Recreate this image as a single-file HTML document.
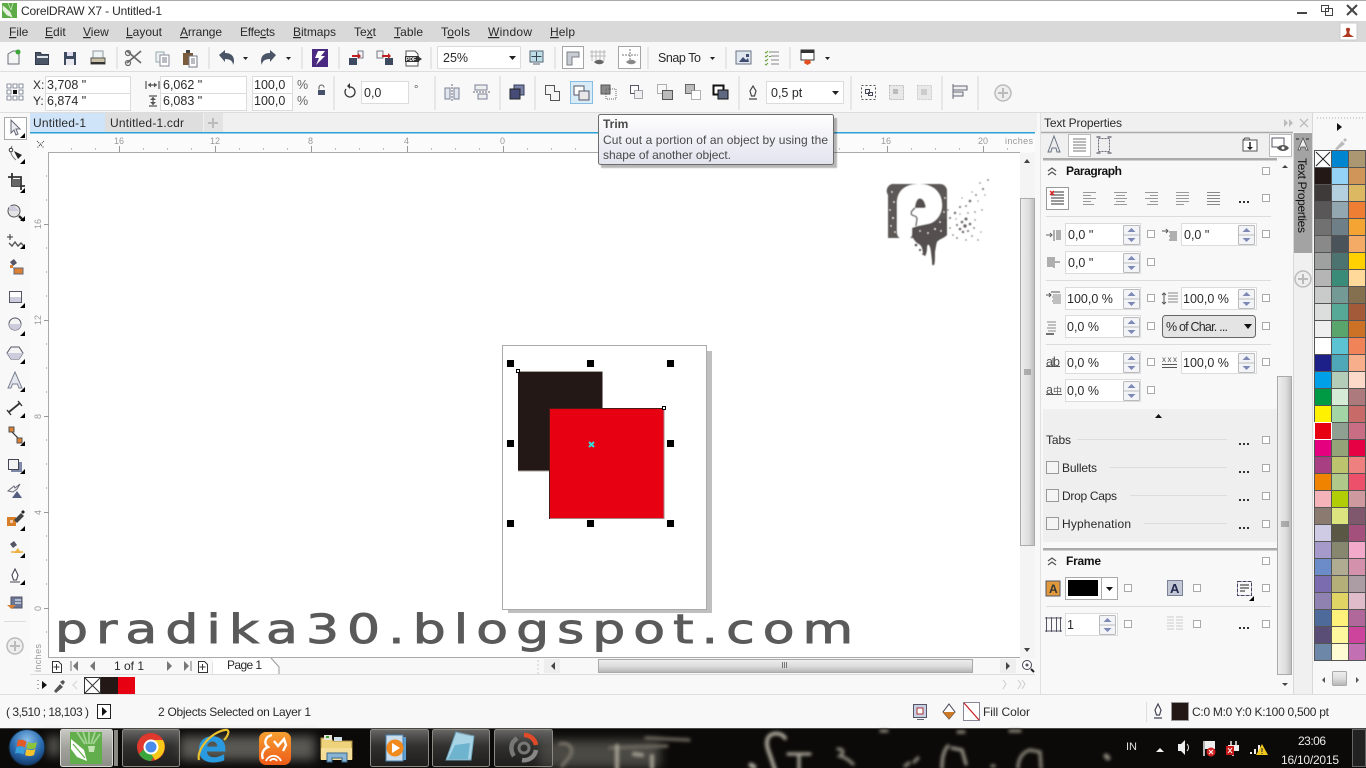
<!DOCTYPE html>
<html><head><meta charset="utf-8"><title>CorelDRAW X7 - Untitled-1</title>
<style>
html,body{margin:0;padding:0;width:1366px;height:768px;overflow:hidden;background:#f8f8f8}
svg{position:absolute;left:0;top:0;display:block}
text{font-family:"Liberation Sans",sans-serif;font-size:12px;fill:#2a2a2a}
.u{text-decoration:underline}
.r{font-size:9px;fill:#999}
.b{font-weight:bold;fill:#111}
.g{fill:none;stroke:#5a6478;stroke-width:1}
.l{stroke:#8a8f98;stroke-width:1;fill:none}
.s{stroke:#d6d6d6;stroke-width:1}
.ip{fill:#fff;stroke:#dcdcdc}
</style></head><body>
<svg width="1366" height="768" viewBox="0 0 1366 768" xmlns="http://www.w3.org/2000/svg">
<defs>
<linearGradient id="tip" x1="0" y1="0" x2="0" y2="1"><stop offset="0" stop-color="#fff"/><stop offset="1" stop-color="#e2e3ee"/></linearGradient>
<linearGradient id="sb" x1="0" y1="0" x2="0" y2="1"><stop offset="0" stop-color="#eee"/><stop offset=".5" stop-color="#ddd"/><stop offset="1" stop-color="#b4b4b4"/></linearGradient>
<linearGradient id="sv" x1="0" y1="0" x2="1" y2="0"><stop offset="0" stop-color="#eee"/><stop offset=".6" stop-color="#ddd"/><stop offset="1" stop-color="#bbb"/></linearGradient>
<linearGradient id="tb" x1="0" y1="0" x2="0" y2="1"><stop offset="0" stop-color="#888" stop-opacity=".75"/><stop offset=".45" stop-color="#4a4a48" stop-opacity=".6"/><stop offset="1" stop-color="#333" stop-opacity=".5"/></linearGradient>
<linearGradient id="ta" x1="0" y1="0" x2="0" y2="1"><stop offset="0" stop-color="#c8c8c4"/><stop offset=".5" stop-color="#a2a29c"/><stop offset="1" stop-color="#8e8e88"/></linearGradient>
<linearGradient id="uc" x1="0" y1="0" x2="0" y2="1"><stop offset="0" stop-color="#f5a030"/><stop offset="1" stop-color="#ee5a18"/></linearGradient>
<radialGradient id="orb" cx=".5" cy=".3" r=".75"><stop offset="0" stop-color="#8cc0ea"/><stop offset=".55" stop-color="#2a6cb0"/><stop offset="1" stop-color="#0e2f5c"/></radialGradient>
<filter id="bl" x="-20%" y="-50%" width="140%" height="200%"><feGaussianBlur stdDeviation="1.700"/></filter>
<filter id="bl3" x="-20%" y="-50%" width="140%" height="200%"><feGaussianBlur stdDeviation="5"/></filter>
<filter id="bl2"><feGaussianBlur stdDeviation="0.5"/></filter>
<g id="cb"><rect x=".5" y=".5" width="7" height="7" fill="#fff" stroke="#aaa"/></g>
<g id="sp"><rect x=".5" y="1.5" width="16" height="19" rx="1" fill="#f2f4f8" stroke="#bbb"/><path d="M.5 11h16" stroke="#bbb"/><path d="M8.500 4l4 4h-8z" fill="#7d88b4"/><path d="M4.500 14h8l-4 4z" fill="#7d88b4"/></g>
<g id="tri"><path d="M0 0h5l-2.500 3z" fill="#222"/></g>
<g id="dots"><path d="M0 0h2v2H0zM4 0h2v2H4zM8 0h2v2H8z" fill="#333"/></g>
<g id="corner"><path d="M5 0v5H0z" fill="#000"/></g>
<g id="plus"><circle cx="0" cy="0" r="8" fill="#eee" stroke="#bbb" stroke-width="1.500"/><path d="M-5 0H5M0-5V5" stroke="#bbb" stroke-width="2"/></g>
</defs>

<!-- chrome backgrounds -->
<rect width="1366" height="768" fill="#f8f8f8"/>
<rect width="1366" height="21" fill="#fff"/>
<rect width="1366" height="1" fill="#aaa"/>
<rect y="21" width="1366" height="21" fill="#d9d9d9"/>
<path d="M0 71.500h1366M0 112.500h1366" stroke="#dedede"/>

<!-- title -->
<rect x="2" y="3" width="15" height="15" fill="#5cab47"/><path d="M3 6l7 6 2 5-5-2-4-5zM8 3l3 7M13 3l-2 7" fill="#e6f2de" stroke="#e6f2de" stroke-width=".6"/>
<text x="21" y="15" textLength="141">CorelDRAW X7 - Untitled-1</text>
<rect x="1297" y="12" width="10" height="2" fill="#444"/>
<path d="M1321.500 5.500h7v6h-7zM1325.500 8.500h7v7h-7z" fill="#fff" stroke="#444"/>
<path d="M1347 5l10 10M1357 5l-10 10" stroke="#444" stroke-width="2"/>
<rect x="1340" y="23" width="17" height="17" fill="#fff" stroke="#ccc"/><path d="M1345 35c2-1 2-3 1-5-1-3 5-3 4 0-1 2-1 4 1 5l3 2h-12z" fill="#b03a20"/>

<!-- menu -->
<text x="9" y="36"><tspan class="u">F</tspan>ile</text>
<text x="45" y="36"><tspan class="u">E</tspan>dit</text>
<text x="83" y="36"><tspan class="u">V</tspan>iew</text>
<text x="126" y="36" textLength="36"><tspan class="u">L</tspan>ayout</text>
<text x="180" y="36" textLength="42"><tspan class="u">A</tspan>rrange</text>
<text x="240" y="36" textLength="35">Effe<tspan class="u">c</tspan>ts</text>
<text x="293" y="36" textLength="43"><tspan class="u">B</tspan>itmaps</text>
<text x="354" y="36" textLength="22">Te<tspan class="u">x</tspan>t</text>
<text x="394" y="36" textLength="29"><tspan class="u">T</tspan>able</text>
<text x="441" y="36" textLength="29">T<tspan class="u">o</tspan>ols</text>
<text x="488" y="36" textLength="44"><tspan class="u">W</tspan>indow</text>
<text x="550" y="36" textLength="25"><tspan class="u">H</tspan>elp</text>

<!-- standard toolbar -->
<g>
<path d="M8 54l5-3h6v13H8z" fill="#f4f4f4" stroke="#6a6f78"/><circle cx="18" cy="52" r="2.500" fill="#3aa535"/>
<path d="M35.500 52.500h5l1 2h7v10h-13z" fill="#4a5568" stroke="#333c4c"/><path d="M37 56h11v2H37z" fill="#dfe3ea"/>
<path d="M64 52h12v13H64z" fill="#3e4a60"/><path d="M67 52h6v4h-6z" fill="#dde"/><path d="M66 59h8v6h-8z" fill="#e8eaf0"/>
<path d="M93 51h10v7H93z" fill="#eef4f4" stroke="#8c98a0"/><path d="M91 58h14v6H91z" fill="#c9c2a8" stroke="#555"/><path d="M91 62h14v2H91z" fill="#333"/>
<path class="s" d="M117 47v22"/>
<path d="M127 51l14 12M141 51l-14 12" stroke="#6c6c6c" stroke-width="1.800"/><circle cx="128" cy="63" r="2.500" fill="none" stroke="#6c6c6c" stroke-width="1.300"/><circle cx="128" cy="53" r="2.500" fill="none" stroke="#6c6c6c" stroke-width="1.300"/>
<path d="M156 52h8v10h-8z" fill="#eef1f4" stroke="#9aa"/><path d="M160 55h9v11h-9z" fill="#fff" stroke="#889"/><path d="M162 58h5M162 60h5M162 62h5" stroke="#778"/>
<path d="M183 53h10v12h-10z" fill="#7a5c3c"/><path d="M186 50h4v3h-4z" fill="#444"/><path d="M189 56h8v11h-8z" fill="#fff" stroke="#778"/><path d="M191 59h4M191 61h4M191 63h4" stroke="#778"/>
<path class="s" d="M209 47v22"/>
<path d="M219 55l6-5v3c6 0 9 3 9 8 0 2-1 4-1 4 0-4-3-6-8-6v3z" fill="#4a5568"/>
<use href="#tri" x="243" y="57"/>
<path d="M276 55l-6-5v3c-6 0-9 3-9 8 0 2 1 4 1 4 0-4 3-6 8-6v3z" fill="#4a5568"/>
<use href="#tri" x="286" y="57"/>
<path class="s" d="M302 47v22"/>
<rect x="312" y="49" width="16" height="18" fill="#4a2a80"/><path d="M325 51h-7l-3 7h4l-3 7 9-9h-4z" fill="#fff"/>
<path class="s" d="M339 47v22"/>
<path d="M349 58h8v7h-8z" fill="#3e4a60"/><path d="M358 51h5v7h-5z" fill="#f4f4f4" stroke="#778"/><path d="M352 55h6v-2l3 3-3 3v-2h-6z" fill="#c02020"/>
<path d="M377 51h6v7h-6z" fill="#f4f4f4" stroke="#778"/><path d="M385 58h8v7h-8z" fill="#3e4a60"/><path d="M382 55h6v-2l3 3-3 3v-2h-6z" fill="#c02020"/>
<path d="M406 51h9l3 3v12h-12z" fill="#fff" stroke="#555"/><rect x="405" y="56" width="14" height="6" fill="#333"/><text x="406" y="61" style="font-size:5px;font-weight:bold;fill:#fff">PDF</text><path d="M419 57l3 2-3 2z" fill="#333"/>
<path class="s" d="M431 47v22"/>
<rect x="437.500" y="46.500" width="83" height="22" class="ip" rx="1"/>
<text x="443" y="62" style="font-size:12.500px">25%</text>
<path d="M509 56h7l-3.500 4z" fill="#222"/>
<rect x="530" y="51" width="13" height="11" fill="#bfdde6" stroke="#567"/><path d="M536.500 52v9M531.500 56.500h10" stroke="#345"/><path d="M533 64h7" stroke="#567"/>
<path class="s" d="M555 47v22"/>
<rect x="562.500" y="46.500" width="21" height="22" fill="#fff" stroke="#a5a5a5"/><path d="M567 52h12v5h-7v8h-5z" fill="#c8ccd2" stroke="#7a8088"/>
<path d="M592 50v11M596 50v11M600 50v11M604 50v11M590 52h16M590 56h16" stroke="#bbb"/><path d="M594 62c3-3 8-3 10 0-2 3-7 3-10 0z" fill="#666"/>
<rect x="618.500" y="46.500" width="22" height="22" fill="#fff" stroke="#a5a5a5"/><path d="M630 49v11M622 55h16" stroke="#777" stroke-dasharray="2 1"/><path d="M626 62c3-3 8-3 10 0-2 3-7 3-10 0z" fill="#888"/>
<path class="s" d="M648 47v22"/>
<text x="658" y="62" style="font-size:12.500px" textLength="43">Snap To</text>
<use href="#tri" x="710" y="57"/>
<path class="s" d="M726 47v22"/>
<rect x="736" y="51" width="15" height="13" fill="#dfe6ee" stroke="#6a7484"/><path d="M739 62l4-5 3 3 2-2 1 4z" fill="#3e4a70"/><path d="M746 54h3v3h-3z" fill="#3e4a70"/>
<path d="M769 52h2M765 52l1 1 2-2M769 56.500h2" stroke="#6aa040" fill="none"/><path d="M771 52h8M771 56h8M771 60h8M771 64h8" stroke="#888"/><path d="M765 56l1 1 2-2M765 60l1 1 2-2M765 64l1 1 2-2" stroke="#6aa040" fill="none"/>
<path class="s" d="M790 47v22"/>
<rect x="801" y="50" width="13" height="10" fill="#fff" stroke="#333"/><rect x="801" y="50" width="13" height="3" fill="#333"/><path d="M805 60h5l1 3-3.500 2-3.500-2z" fill="#e05020"/>
<use href="#tri" x="825" y="57"/>
</g>

<!-- property bar -->
<g>
<path d="M7 85h4v4H7zM13 85h4v4h-4zM19 85h4v4h-4zM7 91h4v4H7zM19 91h4v4h-4zM7 97h4v4H7zM13 97h4v4h-4zM19 97h4v4h-4z" transform="translate(0 -1)" fill="#fff" stroke="#6a7080" stroke-width=".8"/><rect x="13" y="90" width="4" height="4" fill="#111"/>
<text x="33" y="89">X:</text><text x="33" y="105">Y:</text>
<rect x="45.500" y="76.500" width="85" height="17" class="ip"/><rect x="45.500" y="93.500" width="85" height="17" class="ip"/>
<text x="47" y="89" style="font-size:12.500px">3,708 "</text><text x="47" y="105" style="font-size:12.500px">6,874 "</text>
<path d="M146 81v8M159 81v8M148 85h9" stroke="#555" stroke-width="1.200"/><path d="M148 85l3-2.500v5zM157 85l-3-2.500v5z" fill="#555"/>
<path d="M149 96h8M149 106h8M153 97v8" stroke="#555" stroke-width="1.200"/><path d="M153 97l-3 3h6zM153 105l-3-3h6z" fill="#555"/>
<rect x="160.500" y="76.500" width="86" height="17" class="ip"/><rect x="160.500" y="93.500" width="86" height="17" class="ip"/>
<text x="163" y="89" style="font-size:12.500px">6,062 "</text><text x="163" y="105" style="font-size:12.500px">6,083 "</text>
<rect x="252.500" y="76.500" width="40" height="17" class="ip"/><rect x="252.500" y="93.500" width="40" height="17" class="ip"/>
<text x="254" y="89" style="font-size:12.500px">100,0</text><text x="254" y="105" style="font-size:12.500px">100,0</text>
<text x="297" y="89" style="font-size:12.500px;fill:#666">%</text><text x="297" y="105" style="font-size:12.500px;fill:#666">%</text>
<path d="M319 89.500v-2a2.500 2.500 0 015 0" fill="none" stroke="#555"/><rect x="318" y="90" width="7" height="5" fill="#46506a"/>
<path class="s" d="M334 76v34"/>
<path d="M350 87a5 5 0 11-4 2" fill="none" stroke="#333" stroke-width="1.300"/><path d="M350 83l-3 3 3 3z" fill="#333"/>
<rect x="361.500" y="81.500" width="47" height="22" class="ip"/>
<text x="364" y="97" style="font-size:12.500px">0,0</text><text x="414" y="93" style="font-size:11px;fill:#555">°</text>
<path class="s" d="M435 76v34"/>
<path d="M445 88h5v11h-5zM454 88h5v11h-5z" fill="#e4e6ee" stroke="#7a8298"/><path d="M452 84v18" stroke="#667" stroke-dasharray="2 1"/>
<path d="M475 85h12v5h-12zM478 94h9v5h-9z" fill="#eee" stroke="#7a8298"/><path d="M473 92h17" stroke="#667" stroke-dasharray="2 1"/>
<path class="s" d="M500 76v34"/>
<rect x="514" y="85" width="10" height="10" fill="#7a82a8" stroke="#333a58"/><rect x="510" y="89" width="10" height="10" fill="#454c78" stroke="#222"/>
<path class="s" d="M535 76v34"/>
<path d="M545.500 85.500h9v6h5v9h-9v-6h-5z" fill="#f4f4f4" stroke="#555"/>
<rect x="570.500" y="81.500" width="22" height="22" fill="#d8ecf8" stroke="#8abbe0"/><path d="M574 86h10v9h-10z" fill="#fff" stroke="#556"/><path d="M579 91h10v9h-10z" fill="#e8e8ea" stroke="#556"/>
<rect x="601" y="85" width="9" height="9" fill="#888" stroke="#555"/><rect x="606" y="89" width="10" height="10" fill="none" stroke="#666" stroke-dasharray="1 1"/>
<path d="M630.500 85.500h8v8h-8z" fill="#fff" stroke="#556"/><path d="M634.500 90.500h8v8h-8z" fill="#eee" stroke="#556" stroke-dasharray="1 1"/>
<rect x="657.500" y="84.500" width="9" height="9" fill="none" stroke="#666" stroke-dasharray="1 1"/><rect x="662.500" y="90.500" width="10" height="9" fill="#bbb" stroke="#555"/>
<rect x="685.500" y="84.500" width="9" height="9" fill="#bbb" stroke="#666"/><rect x="691.500" y="90.500" width="9" height="9" fill="#fff" stroke="#666" stroke-dasharray="1 1"/>
<rect x="713.500" y="85.500" width="10" height="9" fill="#fff" stroke="#111" stroke-width="2"/><rect x="718" y="90" width="10" height="9" fill="#5e6880" stroke="#111"/>
<path class="s" d="M739 76v34"/>
<path d="M753 86l3 5-1.500 5h-3l-1.500-5zM749 99h8" fill="none" stroke="#444" stroke-width="1.200"/>
<rect x="766.500" y="81.500" width="77" height="22" class="ip"/>
<text x="771" y="97" style="font-size:12.500px">0,5 pt</text>
<path d="M832 91h7l-3.500 4z" fill="#222"/>
<path class="s" d="M851 76v34"/>
<rect x="861.500" y="85.500" width="14" height="14" fill="none" stroke="#555" stroke-dasharray="2 2"/><path d="M865.500 89.500h4v4h-4zM868.500 92.500h4v3h-4z" fill="#f4f4f4" stroke="#445"/>
<rect x="889.500" y="85.500" width="14" height="14" fill="#e8e8e8" stroke="#bbb" stroke-dasharray="2 1"/><path d="M893 89h5v5h-5z" fill="#bbb"/>
<rect x="917.500" y="85.500" width="14" height="14" fill="#e8e8e8" stroke="#ccc" stroke-dasharray="2 1"/><path d="M921 89h6v6h-6z" fill="#ccc"/>
<path class="s" d="M942 76v34"/>
<path d="M953 86h14v4h-14zM953 92h10v4h-10z" fill="#eee" stroke="#667"/><path d="M953 84v15" stroke="#667"/>
<path class="s" d="M978 76v34"/>
<use href="#plus" x="1003" y="93"/>
</g>

<!-- toolbox -->
<rect x="0" y="113" width="29" height="582" fill="#f8f8f8"/>
<rect x="4.500" y="117.500" width="22" height="22" fill="#fff" stroke="#aaa"/>
<g>
<path d="M11 120l9 9h-4l2 5-2 1-2-5-3 3z" fill="#e8ecf0" stroke="#667"/><use href="#corner" x="20" y="133"/>
<path d="M12 146c-2 4-2 9 4 14" fill="none" stroke="#777"/><circle cx="11" cy="150" r="1.800" fill="#fff" stroke="#333"/><path d="M14 151l8 4-4 4z" fill="#222"/><use href="#corner" x="20" y="159"/>
<path d="M9 176h13v13M13 172v13h13" stroke="#333" stroke-width="1.800" fill="none" transform="translate(-1 1)"/><path d="M12 179h8v7h-8z" fill="#666"/><use href="#corner" x="20" y="188"/>
<circle cx="14" cy="211" r="6" fill="#e4e4e4" stroke="#555"/><path d="M14 206h-5v5h10z" fill="#ccd"/><path d="M19 216l5 5" stroke="#222" stroke-width="2.400"/><use href="#corner" x="20" y="216"/>
<path d="M10 234v6M7 237h6" stroke="#333"/><path d="M9 243l3 3 3-4 3 4 3-3 3 3" fill="none" stroke="#555" stroke-width="1.400"/><use href="#corner" x="20" y="244"/>
<path d="M10 262l4-3 3 4-4 3z" fill="#556"/><path d="M13 268h5" stroke="#777"/><rect x="14" y="268" width="9" height="6" fill="#d98032" stroke="#667"/><rect x="10" y="265" width="3" height="3" fill="#d98032"/>
<rect x="9.500" y="291.500" width="12" height="11" fill="#fff" stroke="#556"/><rect x="10" y="297" width="11" height="5" fill="#ccd"/><use href="#corner" x="20" y="303"/>
<circle cx="15" cy="324" r="6" fill="#f4f4f4" stroke="#556"/><path d="M9 324a6 6 0 0012 0z" fill="#ccd"/><use href="#corner" x="20" y="331"/>
<path d="M11 347h8l4 6-4 6h-8l-4-6z" fill="#f4f4f4" stroke="#556"/><path d="M7 353h16l-4 6h-8z" fill="#ccd"/><use href="#corner" x="20" y="359"/>
<path d="M15 372l7 16h-3l-1.500-4h-5l-1.500 4H8z" fill="#e4e6ee" stroke="#7a8090"/><use href="#corner" x="20" y="387"/>
<path d="M9 412l11-9" stroke="#333" stroke-width="1.800"/><path d="M7 410l4 5M18 401l4 5" stroke="#333" stroke-width="1.400"/><use href="#corner" x="20" y="413"/>
<path d="M11 431l9 9" stroke="#333" stroke-width="1.200"/><rect x="9" y="427" width="5" height="5" fill="#d98032" stroke="#555"/><rect x="17" y="438" width="5" height="5" fill="#d98032" stroke="#555"/><use href="#corner" x="20" y="441"/>
<rect x="8.500" y="459.500" width="10" height="10" fill="#f4f4f4" stroke="#445"/><path d="M19 462h3v10H11v-2h8z" fill="#8088a8"/><use href="#corner" x="20" y="469"/>
<path d="M8 491l6-5 1 2 5-4-3 5-4 3z" fill="#f4f4f4" stroke="#667"/><path d="M17 491l5 7h-10z" fill="#555d80"/>
<path d="M7 517h9v9H7z" fill="#d97e28"/><path d="M10 520h3v3h-3z" fill="#fff" opacity=".6"/><path d="M14 520l7-7 3 3-7 7z" fill="#444"/><path d="M21 512l2-2 2 2-2 2z" fill="#222"/><use href="#corner" x="20" y="526"/>
<path d="M10 544l4-3 3 4-4 3z" fill="#556"/><path d="M18 548l3 5h-7z" fill="#eeb040"/><path d="M11 552h12" stroke="#eeb040" stroke-width="1.500"/><use href="#corner" x="20" y="553"/>
<path d="M15 569l3 6-1.500 5h-3l-1.500-5zM10 582h10" fill="#fff" stroke="#445" stroke-width="1.100"/><use href="#corner" x="20" y="580"/>
<rect x="11" y="597" width="11" height="11" fill="#6a7898" stroke="#556"/><path d="M15 600h6M15 603h6" stroke="#fff"/><path d="M7 605h9l-4.500 4z" fill="#d98032"/>
<path d="M4 621.500h22" stroke="#ddd"/>
<use href="#plus" x="15" y="646"/>
</g>

<!-- tabs -->
<rect x="30" y="113" width="1007" height="19" fill="#f0f0f0"/>
<rect x="30" y="113" width="75" height="19" fill="#cfe4f8"/>
<rect x="105" y="113" width="98" height="19" fill="#dedede"/>
<rect x="204" y="113" width="19" height="19" fill="#e3e3e3"/>
<path d="M213 118v10M208 123h10" stroke="#bbb" stroke-width="2"/>
<text x="33" y="127" textLength="53">Untitled-1</text>
<text x="110" y="127" textLength="74">Untitled-1.cdr</text>
<rect x="30" y="132" width="1005" height="1.500" fill="#2aa1d8"/>

<!-- rulers & canvas -->
<rect x="30" y="134" width="1005" height="18" fill="#fbfbfb"/>
<rect x="30" y="134" width="18" height="526" fill="#fbfbfb"/>
<rect x="49" y="152" width="971" height="505" fill="#fff"/>
<path d="M48.500 152.500H1020M48.500 152v505.500H1020" stroke="#aaa" fill="none"/>
<path d="M37 141l7 7M44 141l-7 7" stroke="#333" stroke-width="1" stroke-dasharray="1 1"/>
<g>
<text x="114" y="144" class="r">16</text><text x="210" y="144" class="r">12</text><text x="308" y="144" class="r">8</text><text x="404" y="144" class="r">4</text><text x="500" y="144" class="r">0</text><text x="881" y="144" class="r">16</text><text x="978" y="144" class="r">20</text><text x="1005" y="144" class="r" textLength="28">inches</text>
<path d="M119.500 146v6M215.500 146v6M311.500 146v6M407.500 146v6M503.500 146v6M887.500 146v6M983.500 146v6" stroke="#999"/>
<path d="M71 149h1M95 149h1M143 149h1M167 149h1M191 149h1M239 149h1M263 149h1M287 149h1M335 149h1M359 149h1M383 149h1M431 149h1M455 149h1M479 149h1M527 149h1M551 149h1M575 149h1M839 149h1M863 149h1M911 149h1M935 149h1M959 149h1M1007 149h1" stroke="#888"/>
<g transform="rotate(-90)">
<text x="-229" y="41" class="r">16</text><text x="-325" y="41" class="r">12</text><text x="-419" y="41" class="r">8</text><text x="-515" y="41" class="r">4</text><text x="-611" y="41" class="r">0</text><text x="-672" y="41" class="r" textLength="28">inches</text>
</g>
<path d="M44 224.500h5M44 320.500h5M44 416.500h5M44 512.500h5M44 608.500h5" stroke="#999"/>
<path d="M46 176h1M46 200h1M46 248h1M46 272h1M46 296h1M46 344h1M46 368h1M46 392h1M46 440h1M46 464h1M46 488h1M46 536h1M46 560h1M46 584h1M46 632h1" stroke="#888"/>
</g>

<!-- page -->
<rect x="508" y="351" width="204" height="262" fill="#bfbfbf"/>
<rect x="502.500" y="345.500" width="204" height="264" fill="#fff" stroke="#aaa"/>
<rect x="518" y="371.500" width="84.500" height="99.500" fill="#231815"/><path d="M518 371.500h84M518 471h32" stroke="#aaa49e"/>
<rect x="549.500" y="408.500" width="114.500" height="110" fill="#e60012" stroke="#4a1a18"/><path d="M664 409v109.500H550" stroke="#a58585" fill="none"/>
<path d="M507 360h7v7h-7zM587 360h7v7h-7zM667 360h7v7h-7zM507 440h7v7h-7zM667 440h7v7h-7zM507 520h7v7h-7zM587 520h7v7h-7zM667 520h7v7h-7z" fill="#000"/>
<path d="M589 442l5 5M594 442l-5 5" stroke="#35dfd3" stroke-width="2"/>
<rect x="516.500" y="369.500" width="3" height="3" fill="#fff" stroke="#000"/>
<rect x="662.500" y="406.500" width="3" height="3" fill="#fff" stroke="#000"/>

<!-- logo -->
<g filter="url(#bl2)">
<path d="M895 184h45a7 7 0 017 7v37c0 6-4 9-8 10l-51 0v-47a7 7 0 017-7z" fill="#5c5857" transform="translate(0 0)"/>
<path d="M888 195v36a7 7 0 007 7h5v-54h-5a7 7 0 00-7 11z" fill="#5c5857"/>
<path d="M897 232V203c0-12 8-19 22-19 15 0 23 9 23 21 0 12-8 19-20 21l-10 2v6c0 3-2 5-7 5-5 0-8-2-8-7z" fill="#fff"/>
<path d="M918 199c3-2 6 1 7 5 1 2 1 4-1 4l-9 0c0-3 1-7 3-9z" fill="#55504f"/>
<path d="M915 208c-3 2-5 5-3 7 2 1 5 1 5 4 0 2-1 4-1 7" fill="none" stroke="#55504f" stroke-width="1.400"/>
<path d="M912 228c6-3 18-3 30-9l5 0v16c-4 4-8 4-10 7-1 3-1 5-2 10 0 6 0 12-1 13-2 1-2-1-2-4-1-8-1-13-3-16-1-1-2 0-2 3 0 4-1 7-2 8-2 0-2-4-3-8-1-3-3-4-5-5-2-2-4-4-5-8z" fill="#55504f"/>
<circle cx="916" cy="245" r="1.300" fill="#55504f"/><circle cx="920" cy="250" r="1.100" fill="#55504f"/><circle cx="923" cy="254" r=".9" fill="#55504f"/>
<g fill="#fff">
<circle cx="892" cy="192" r=".7"/><circle cx="894" cy="202" r=".8"/><circle cx="890" cy="210" r=".7"/><circle cx="893" cy="218" r=".9"/><circle cx="891" cy="226" r=".7"/><circle cx="895" cy="232" r=".8"/><circle cx="940" cy="222" r=".8"/><circle cx="944" cy="212" r=".7"/><circle cx="945" cy="198" r=".7"/><circle cx="935" cy="229" r=".9"/><circle cx="928" cy="233" r=".8"/><circle cx="941" cy="231" r=".7"/><circle cx="920" cy="231" r=".7"/>
</g>
<g fill="#6a6665">
<circle cx="950" cy="218" r="1"/><circle cx="955" cy="213" r="1.200"/><circle cx="960" cy="207" r="1"/><circle cx="966" cy="206" r=".9"/><circle cx="970" cy="201" r="1.300"/><circle cx="976" cy="195" r=".9"/><circle cx="983" cy="189" r="1"/><circle cx="988" cy="180" r=".9"/><circle cx="980" cy="183" r=".7"/><circle cx="957" cy="225" r="1"/><circle cx="962" cy="222" r="1.300"/><circle cx="966" cy="219" r="1.500"/><circle cx="960" cy="229" r="1.300"/><circle cx="965" cy="226" r="1.700"/><circle cx="970" cy="224" r="1.300"/><circle cx="963" cy="232" r="1.200"/><circle cx="968" cy="231" r="1"/><circle cx="974" cy="228" r=".9"/><circle cx="950" cy="228" r=".8"/><circle cx="953" cy="235" r=".8"/><circle cx="957" cy="238" r=".9"/><circle cx="972" cy="236" r=".8"/><circle cx="978" cy="240" r=".7"/><circle cx="966" cy="240" r=".7"/><circle cx="982" cy="210" r=".7"/><circle cx="975" cy="212" r=".8"/><circle cx="948" cy="210" r=".7"/><circle cx="985" cy="195" r=".6"/><circle cx="972" cy="192" r=".6"/><circle cx="962" cy="198" r=".6"/><circle cx="978" cy="201" r=".6"/><circle cx="968" cy="213" r=".7"/><circle cx="956" cy="219" r=".6"/><circle cx="975" cy="220" r=".7"/><circle cx="981" cy="232" r=".6"/><circle cx="960" cy="214" r=".6"/>
</g>
</g>

<!-- watermark -->
<g transform="translate(55 643) scale(1.300 1)"><text x="0" y="0" textLength="614" lengthAdjust="spacing" style="font-family:'DejaVu Sans',sans-serif;font-size:40px;fill:#5a5a5a;stroke:#5a5a5a;stroke-width:.9">pradika30.blogspot.com</text></g>

<!-- tooltip -->
<rect x="601" y="118" width="236" height="50" fill="#000" opacity=".28" filter="url(#bl2)"/>
<rect x="598.500" y="114.500" width="235" height="50" rx="2" fill="url(#tip)" stroke="#6d6d6d"/>
<text x="603" y="128" style="font-weight:bold;fill:#4a4a4a">Trim</text>
<text x="603" y="144" style="fill:#4a4a4a" textLength="225">Cut out a portion of an object by using the</text>
<text x="603" y="159" style="fill:#4a4a4a" textLength="128">shape of another object.</text>

<!-- canvas v-scroll -->
<rect x="1020" y="153" width="15" height="505" fill="#f4f4f4"/>
<rect x="1020.500" y="198.500" width="14" height="347" fill="url(#sv)" stroke="#aaa"/>
<path d="M1024 370h7M1024 372h7M1024 374h7" stroke="#777"/>
<path d="M1027 159l-3 4h6z" fill="#444"/><path d="M1024 648h6l-3 4z" fill="#444"/>
<path d="M1040.500 113v582" stroke="#e0e0e0"/>

<!-- page nav / h scroll -->
<rect x="49" y="658" width="986" height="16" fill="#f8f8f8"/>
<g>
<path d="M52.500 661.500h6l3 3v8h-9z" fill="#fff" stroke="#333"/><path d="M56.500 664v6M53.500 667h6" stroke="#333"/>
<path d="M71 661v10" stroke="#777"/><path d="M78 661l-5 5 5 5z" fill="#777"/>
<path d="M95 661l-5 5 5 5z" fill="#777"/>
<text x="114" y="670" textLength="30">1 of 1</text>
<path d="M167 661l5 5-5 5z" fill="#777"/>
<path d="M184 661l5 5-5 5z" fill="#777"/><path d="M191 661v10" stroke="#777"/>
<path d="M198.500 661.500h6l3 3v8h-9z" fill="#fff" stroke="#333"/><path d="M202.500 664v6M199.500 667h6" stroke="#333"/>
<path d="M213 662v12" stroke="#ccc"/>
<path d="M213 658.500h58l8 9v6.500h-66z" fill="#fff"/><path d="M271 658l8 9v7" fill="none" stroke="#999"/>
<text x="227" y="669" textLength="35">Page 1</text>
<path d="M538 660v14" stroke="#ccc" stroke-dasharray="2 2"/>
<rect x="544" y="659" width="16" height="14" fill="#eee"/><path d="M555 662l-4 4 4 4z" fill="#444"/>
<rect x="598.500" y="659.500" width="374" height="13" fill="url(#sb)" stroke="#aaa"/>
<path d="M782.500 662v6M784.500 662v6M786.500 662v6" stroke="#777"/>
<rect x="1000" y="659" width="16" height="14" fill="#eee"/><path d="M1006 662l4 4-4 4z" fill="#444"/>
<circle cx="1027" cy="665" r="4.500" fill="#fff" stroke="#445"/><path d="M1031 669l3 3" stroke="#222" stroke-width="2"/><circle cx="1027" cy="665" r="1.500" fill="#556"/>
</g>
<path d="M30 674.500h1005" stroke="#dcdcdc"/>
<!-- doc palette -->
<path d="M38 680v1M38 684v1M38 688v1" stroke="#aaa" stroke-width="2"/>
<path d="M42 681l5 4-5 4z" fill="#111"/>
<path d="M54 691l6-7 3 3-7 6zM60 682l3-2 2 2-2 3z" fill="#555"/>
<path d="M77 681l-4 4 4 4" fill="none" stroke="#ddd" stroke-width="1.500"/>
<rect x="84.500" y="677.500" width="16" height="16" fill="#fff" stroke="#333"/><path d="M85 678l15 15M100 678l-15 15" stroke="#333"/>
<rect x="101" y="677" width="17" height="17" fill="#231815"/><rect x="118" y="677" width="17" height="17" fill="#e60012"/>
<path d="M1003 680l3 4-3 5M1018 680l3 4-3 5M1022 680l3 4-3 5" fill="none" stroke="#ccc"/>

<!-- right panel -->
<rect x="1041" y="113" width="272" height="582" fill="#f8f8f8"/>
<rect x="1041" y="113" width="272" height="19" fill="#f0f0f0"/>
<rect x="1041" y="133" width="252" height="26" fill="#f0f0f0"/>
<text x="1044" y="127" textLength="78">Text Properties</text>
<path d="M1284 119l4 4-4 4zM1289 119l4 4-4 4z" fill="#bbb"/>
<path d="M1300 119l8 8M1308 119l-8 8" stroke="#bbb" stroke-width="1.300"/>
<path d="M1041 132.500h252" stroke="#aaa" stroke-width="1.500"/>
<path d="M1054 136l6 16h-3l-1-4h-4l-1 4h-3z" fill="#ececec" stroke="#6a7484"/>
<rect x="1068.500" y="134.500" width="22" height="22" fill="#fff" stroke="#bbb"/><path d="M1073 139h13M1073 142h13M1073 145h13M1073 148h13M1073 151h13" stroke="#777"/>
<rect x="1098.500" y="138.500" width="11" height="13" fill="#eee" stroke="#667" stroke-dasharray="2 1"/><path d="M1096.500 137h4M1107.500 137h4M1096.500 153h4M1107.500 153h4" stroke="#334"/>
<path d="M1243 140h14v11h-14z" fill="#fff" stroke="#555"/><path d="M1250 142v6" stroke="#222" stroke-width="1.500"/><path d="M1250 150l-3-3h6z" fill="#222"/><path d="M1243 140l2-2h4l1 2" fill="none" stroke="#555"/>
<rect x="1269.500" y="134.500" width="22" height="22" fill="#fff" stroke="#bbb"/><path d="M1272 138h12v9h-12z" fill="#fff" stroke="#556"/><path d="M1277 148c3-4 9-4 12 0-3 4-9 4-12 0z" fill="#555"/><circle cx="1283" cy="148" r="1.500" fill="#fff"/>
<rect x="1043" y="158" width="234" height="2.500" fill="#aaa"/>

<!-- panel vertical tab -->
<rect x="1293" y="133" width="19" height="120" fill="#a3a3a3"/>
<rect x="1293" y="253" width="19" height="442" fill="#f0f0f0"/>
<path d="M1293.500 133v562M1312.500 113v582" stroke="#d8d8d8"/>
<path d="M1303 138l5 12h-2l-1-3h-4l-1 3h-2z" fill="#eee" stroke="#444" stroke-width=".7"/><path d="M1296 139h3M1306 139h3" stroke="#222"/>
<text transform="translate(1298 158) rotate(90)" textLength="75" style="fill:#111">Text Properties</text>
<use href="#plus" x="1303" y="279"/>

<!-- panel scrollbar -->
<rect x="1277" y="161" width="16" height="534" fill="#f8f8f8"/>
<path d="M1285 165l-3 3h6z" fill="#444"/>
<rect x="1277.500" y="376.500" width="14" height="298" fill="url(#sv)" stroke="#aaa"/>
<path d="M1281 522h8M1281 524h8M1281 526h8" stroke="#777"/>
<path d="M1282 683h6l-3 3z" fill="#444"/>

<!-- Paragraph -->
<path d="M1048 171l4-3 4 3M1048 175l4-3 4 3" fill="none" stroke="#555" stroke-width="1.300"/>
<text x="1066" y="175" class="b" textLength="56">Paragraph</text>
<use href="#cb" x="1262" y="167"/>
<rect x="1046.500" y="187.500" width="22" height="22" fill="#fff" stroke="#999"/>
<path d="M1051 192h13M1051 195h13M1051 198h13M1051 201h13M1051 204h13" stroke="#333"/><path d="M1050 191l4 4M1054 191l-4 4" stroke="#d22" stroke-width="1.300"/>
<path d="M1083 192.500h13M1083 195.500h8M1083 198.500h13M1083 201.500h8M1083 204.500h11" stroke="#999"/>
<path d="M1114 192.500h13M1116 195.500h9M1114 198.500h13M1116 201.500h9M1114 204.500h13" stroke="#999"/>
<path d="M1145 192.500h13M1150 195.500h8M1145 198.500h13M1150 201.500h8M1147 204.500h11" stroke="#999"/>
<path d="M1176 192.500h13M1176 195.500h13M1176 198.500h13M1176 201.500h13M1176 204.500h8" stroke="#999"/>
<path d="M1207 192.500h13M1207 195.500h13M1207 198.500h13M1207 201.500h13M1207 204.500h13" stroke="#888"/>
<use href="#dots" x="1239" y="201"/>
<use href="#cb" x="1262" y="194"/>
<path d="M1046 216.500h225M1046 280.500h225M1046 344.500h225M1046 606.500h225" stroke="#dcdcdc"/>

<!-- fields -->
<g>
<path d="M1046 235h6M1050 233l2 2-2 2M1054 230v11" fill="none" stroke="#666"/><path d="M1056 231h5M1056 233h5M1056 235h5M1056 237h5M1056 239h5" stroke="#666"/>
<rect x="1065.500" y="223.500" width="75" height="22" class="ip"/><text x="1068" y="239" style="font-size:12.500px">0,0 "</text><use href="#sp" x="1123" y="224"/>
<use href="#cb" x="1147" y="230"/>
<path d="M1162 231h6M1166 229l2 2-2 2" fill="none" stroke="#555"/><path d="M1169 232h8M1170 234h7M1169 236h8M1170 238h7M1169 240h8" stroke="#666"/>
<rect x="1181.500" y="223.500" width="75" height="22" class="ip"/><text x="1184" y="239" style="font-size:12.500px">0,0 "</text><use href="#sp" x="1238" y="224"/>
<use href="#cb" x="1262" y="230"/>

<path d="M1047 258h6M1047 260h6M1047 262h6M1047 264h6M1047 266h6" stroke="#666"/><path d="M1054 257v11M1055 262h5" stroke="#666"/>
<rect x="1065.500" y="251.500" width="75" height="22" class="ip"/><text x="1068" y="267" style="font-size:12.500px">0,0 "</text><use href="#sp" x="1123" y="252"/>
<use href="#cb" x="1147" y="258"/>

<path d="M1046 295h5M1049 293l2 2-2 2" fill="none" stroke="#555"/><path d="M1051 292h9" stroke="#555"/><path d="M1053 295h8M1052 297h9M1053 299h8M1052 301h9M1053 303h8" stroke="#888"/>
<rect x="1065.500" y="287.500" width="75" height="22" class="ip"/><text x="1067" y="303" style="font-size:12.500px">100,0 %</text><use href="#sp" x="1123" y="288"/>
<use href="#cb" x="1147" y="294"/>
<path d="M1164 293v11M1162 295l2-2 2 2M1162 302l2 2 2-2" fill="none" stroke="#555"/><path d="M1168 293h10M1168 296h10M1168 299h10M1168 302h10" stroke="#888"/>
<rect x="1181.500" y="287.500" width="75" height="22" class="ip"/><text x="1183" y="303" style="font-size:12.500px">100,0 %</text><use href="#sp" x="1238" y="288"/>
<use href="#cb" x="1262" y="294"/>

<path d="M1047 322h9M1048 325h8M1047 328h9M1048 331h8" stroke="#888"/><path d="M1046 334h8" stroke="#444" stroke-width="1.500"/>
<rect x="1065.500" y="315.500" width="75" height="22" class="ip"/><text x="1067" y="331" style="font-size:12.500px">0,0 %</text><use href="#sp" x="1123" y="316"/>
<use href="#cb" x="1147" y="322"/>
<rect x="1162.500" y="315.500" width="93" height="22" rx="3" fill="#e4e4e4" stroke="#666"/>
<text x="1166" y="331" style="font-size:12.500px" textLength="62">% of Char. ...</text><path d="M1244 324h8l-4 5z" fill="#111"/>
<use href="#cb" x="1262" y="322"/>

<text x="1046" y="366" style="font-size:12.500px;fill:#555">ab</text><path d="M1046 366.500h14M1053 358v9" stroke="#555"/>
<rect x="1065.500" y="351.500" width="75" height="22" class="ip"/><text x="1067" y="367" style="font-size:12.500px">0,0 %</text><use href="#sp" x="1123" y="352"/>
<use href="#cb" x="1147" y="358"/>
<text x="1162" y="362" style="font-size:8px;fill:#555" textLength="15">xxx</text><path d="M1162 364.500h15M1162 367.500h15" stroke="#555"/>
<rect x="1181.500" y="351.500" width="75" height="22" class="ip"/><text x="1183" y="367" style="font-size:12.500px">100,0 %</text><use href="#sp" x="1238" y="352"/>
<use href="#cb" x="1262" y="358"/>

<text x="1046" y="394" style="font-size:12.500px;fill:#555">a</text><text x="1053" y="394" style="font-family:'Liberation Sans','Noto Sans CJK SC',sans-serif;font-size:9px;fill:#555">中</text><path d="M1046 394.500h16" stroke="#555"/>
<rect x="1065.500" y="379.500" width="75" height="22" class="ip"/><text x="1067" y="395" style="font-size:12.500px">0,0 %</text><use href="#sp" x="1123" y="380"/>
<use href="#cb" x="1147" y="386"/>
</g>

<!-- gray section -->
<rect x="1043" y="409" width="234" height="133" fill="#efefef"/>
<path d="M1155 418l3.500-4 3.500 4z" fill="#111"/>
<text x="1046" y="444" textLength="25">Tabs</text><path d="M1077 439.500h150" stroke="#ddd"/>
<use href="#dots" x="1239" y="443"/><use href="#cb" x="1262" y="436"/>
<rect x="1046.500" y="461.500" width="12" height="12" fill="#f4f4f4" stroke="#999"/>
<text x="1062" y="472" textLength="35">Bullets</text><path d="M1110 467.500h117" stroke="#ddd"/>
<use href="#dots" x="1239" y="471"/><use href="#cb" x="1262" y="464"/>
<rect x="1046.500" y="489.500" width="12" height="12" fill="#f4f4f4" stroke="#999"/>
<text x="1062" y="500" textLength="55">Drop Caps</text><path d="M1130 495.500h97" stroke="#ddd"/>
<use href="#dots" x="1239" y="499"/><use href="#cb" x="1262" y="492"/>
<rect x="1046.500" y="517.500" width="12" height="12" fill="#f4f4f4" stroke="#999"/>
<text x="1062" y="528" textLength="69">Hyphenation</text><path d="M1144 523.500h83" stroke="#ddd"/>
<use href="#dots" x="1239" y="527"/><use href="#cb" x="1262" y="520"/>
<rect x="1043" y="548" width="234" height="2.500" fill="#aaa"/>

<!-- Frame -->
<path d="M1048 561l4-3 4 3M1048 565l4-3 4 3" fill="none" stroke="#555" stroke-width="1.300"/>
<text x="1066" y="565" class="b" textLength="35">Frame</text>
<use href="#cb" x="1262" y="557"/>
<rect x="1046" y="581" width="14" height="15" fill="#e09a3c" stroke="#556"/><text x="1049" y="593" style="font-weight:bold;font-size:12px;fill:#333">A</text>
<rect x="1065.500" y="577.500" width="52" height="22" fill="#fff" stroke="#aaa"/><rect x="1068" y="580" width="30" height="16" fill="#000"/><path d="M1101.500 578v21" stroke="#aaa"/><path d="M1106 587h7l-3.500 4z" fill="#111"/>
<use href="#cb" x="1124" y="584"/>
<rect x="1167.500" y="580.500" width="15" height="15" fill="#c4c8d6" stroke="#7a8298"/><text x="1170" y="593" style="font-weight:bold;font-size:13px;fill:#222a50">A</text>
<use href="#cb" x="1193" y="584"/>
<rect x="1237.500" y="581.500" width="14" height="14" fill="#f8f8f8" stroke="#446" stroke-dasharray="4 1"/><path d="M1240 585h9M1240 588h9M1240 591h5" stroke="#222"/><use href="#corner" x="1249" y="596"/>
<use href="#cb" x="1262" y="584"/>
<path d="M1046.500 617v15M1051.500 617v15M1056.500 617v15M1060.500 617v15M1045 618h17M1045 631h17" fill="none" stroke="#556"/>
<rect x="1065.500" y="613.500" width="52" height="22" class="ip"/><text x="1067" y="629" style="font-size:12.500px">1</text><use href="#sp" x="1099" y="614"/>
<use href="#cb" x="1124" y="620"/>
<path d="M1167 617h7M1176 617h7M1167 620h7M1176 620h7M1167 623h7M1176 623h7M1167 626h7M1176 626h7M1167 629h7M1176 629h7" stroke="#ccc"/>
<use href="#cb" x="1193" y="620"/>
<use href="#dots" x="1239" y="627"/><use href="#cb" x="1262" y="620"/>

<!-- color palette -->
<rect x="1313" y="113" width="53" height="582" fill="#f8f8f8"/>
<path d="M1317 118h48" stroke="#aaa" stroke-dasharray="1 2"/>
<path d="M1337 123l5 4-5 4z" fill="#111"/>
<path d="M1335 149l7-8 3 3-8 6zM1343 140l2-2 2 2-2 2z" fill="#bbb"/>
<rect x="1314" y="150" width="52" height="511" fill="#555"/>
<g>
<rect x="1315" y="151" width="16" height="16" fill="#fff"/><path d="M1316 152l14 14M1330 152l-14 14" stroke="#222"/>
<path d="M1315 168h16v16h-16z" fill="#231815"/><path d="M1315 185h16v16h-16z" fill="#3e3a39"/><path d="M1315 202h16v16h-16z" fill="#595757"/><path d="M1315 219h16v16h-16z" fill="#727171"/><path d="M1315 236h16v16h-16z" fill="#898989"/><path d="M1315 253h16v16h-16z" fill="#9fa0a0"/><path d="M1315 270h16v16h-16z" fill="#b5b5b6"/><path d="M1315 287h16v16h-16z" fill="#c9caca"/><path d="M1315 304h16v16h-16z" fill="#dcdddd"/><path d="M1315 321h16v16h-16z" fill="#efefef"/><path d="M1315 338h16v16h-16z" fill="#ffffff"/><path d="M1315 355h16v16h-16z" fill="#1d2088"/><path d="M1315 372h16v16h-16z" fill="#00a0e9"/><path d="M1315 389h16v16h-16z" fill="#009944"/><path d="M1315 406h16v16h-16z" fill="#fff100"/><path d="M1315 423h16v16h-16z" fill="#e60012"/><path d="M1315 440h16v16h-16z" fill="#e4007f"/><path d="M1315 457h16v16h-16z" fill="#a83f82"/><path d="M1315 474h16v16h-16z" fill="#f08300"/><path d="M1315 491h16v16h-16z" fill="#f4b3b8"/><path d="M1315 508h16v16h-16z" fill="#8a7a70"/><path d="M1315 525h16v16h-16z" fill="#cfcbe5"/><path d="M1315 542h16v16h-16z" fill="#a59aca"/><path d="M1315 559h16v16h-16z" fill="#6b8cc8"/><path d="M1315 576h16v16h-16z" fill="#7b6cb0"/><path d="M1315 593h16v16h-16z" fill="#8f82b0"/><path d="M1315 610h16v16h-16z" fill="#4e6a9a"/><path d="M1315 627h16v16h-16z" fill="#5a4d76"/><path d="M1315 644h16v16h-16z" fill="#6d87a8"/>
<path d="M1332 151h16v16h-16z" fill="#0086d1"/><path d="M1332 168h16v16h-16z" fill="#94d3f5"/><path d="M1332 185h16v16h-16z" fill="#b4cfde"/><path d="M1332 202h16v16h-16z" fill="#93a7b0"/><path d="M1332 219h16v16h-16z" fill="#6f7f87"/><path d="M1332 236h16v16h-16z" fill="#4a5359"/><path d="M1332 253h16v16h-16z" fill="#4c7370"/><path d="M1332 270h16v16h-16z" fill="#3a8b78"/><path d="M1332 287h16v16h-16z" fill="#749a95"/><path d="M1332 304h16v16h-16z" fill="#56a897"/><path d="M1332 321h16v16h-16z" fill="#5aa56c"/><path d="M1332 338h16v16h-16z" fill="#5bc3d1"/><path d="M1332 355h16v16h-16z" fill="#4ea8b8"/><path d="M1332 372h16v16h-16z" fill="#b4cdb9"/><path d="M1332 389h16v16h-16z" fill="#d6ebd6"/><path d="M1332 406h16v16h-16z" fill="#a2d4a5"/><path d="M1332 423h16v16h-16z" fill="#8fa093"/><path d="M1332 440h16v16h-16z" fill="#95a378"/><path d="M1332 457h16v16h-16z" fill="#bcc46e"/><path d="M1332 474h16v16h-16z" fill="#b0c88a"/><path d="M1332 491h16v16h-16z" fill="#b1cd06"/><path d="M1332 508h16v16h-16z" fill="#dbe47f"/><path d="M1332 525h16v16h-16z" fill="#5b5745"/><path d="M1332 542h16v16h-16z" fill="#87866f"/><path d="M1332 559h16v16h-16z" fill="#b0ac92"/><path d="M1332 576h16v16h-16z" fill="#b4ae78"/><path d="M1332 593h16v16h-16z" fill="#e0d465"/><path d="M1332 610h16v16h-16z" fill="#fff27a"/><path d="M1332 627h16v16h-16z" fill="#fff79d"/><path d="M1332 644h16v16h-16z" fill="#fffbd2"/>
<path d="M1349 151h16v16h-16z" fill="#ab9873"/><path d="M1349 168h16v16h-16z" fill="#cf9559"/><path d="M1349 185h16v16h-16z" fill="#dcb862"/><path d="M1349 202h16v16h-16z" fill="#ef7e35"/><path d="M1349 219h16v16h-16z" fill="#f4a433"/><path d="M1349 236h16v16h-16z" fill="#f4ab66"/><path d="M1349 253h16v16h-16z" fill="#ffd100"/><path d="M1349 270h16v16h-16z" fill="#ffd99a"/><path d="M1349 287h16v16h-16z" fill="#84704f"/><path d="M1349 304h16v16h-16z" fill="#a35a38"/><path d="M1349 321h16v16h-16z" fill="#cc7227"/><path d="M1349 338h16v16h-16z" fill="#f08358"/><path d="M1349 355h16v16h-16z" fill="#f6ae8b"/><path d="M1349 372h16v16h-16z" fill="#fcd9c8"/><path d="M1349 389h16v16h-16z" fill="#ac7a7c"/><path d="M1349 406h16v16h-16z" fill="#c86b68"/><path d="M1349 423h16v16h-16z" fill="#c96d84"/><path d="M1349 440h16v16h-16z" fill="#e60044"/><path d="M1349 457h16v16h-16z" fill="#ef8080"/><path d="M1349 474h16v16h-16z" fill="#ec506b"/><path d="M1349 491h16v16h-16z" fill="#cf99a0"/><path d="M1349 508h16v16h-16z" fill="#80586e"/><path d="M1349 525h16v16h-16z" fill="#a3507c"/><path d="M1349 542h16v16h-16z" fill="#f3a9c9"/><path d="M1349 559h16v16h-16z" fill="#d391ac"/><path d="M1349 576h16v16h-16z" fill="#ac9da5"/><path d="M1349 593h16v16h-16z" fill="#e0bccb"/><path d="M1349 610h16v16h-16z" fill="#b0689a"/><path d="M1349 627h16v16h-16z" fill="#cc449c"/><path d="M1349 644h16v16h-16z" fill="#c26fb4"/>
<rect x="1314.500" y="422.500" width="17" height="17" fill="none" stroke="#fff"/>
</g>
<path d="M1325 677l-3 3 3 3z" fill="#555"/><path d="M1356 677l3 3-3 3z" fill="#555"/>
<rect x="1332.500" y="671.500" width="14" height="14" rx="1" fill="url(#sb)" stroke="#aaa"/>
<path d="M1041 694.500h325" stroke="#dedede"/>

<!-- status bar -->
<rect y="695" width="1366" height="33" fill="#f8f8f8"/>
<path d="M0 694.500h1366" stroke="#dedede"/>
<text x="6" y="716" textLength="83">( 3,510 ; 18,103 )</text>
<rect x="97.500" y="704.500" width="13" height="14" fill="#fff" stroke="#222"/><path d="M102 707l5 4.500-5 4.500z" fill="#111"/>
<text x="158" y="716" textLength="153">2 Objects Selected on Layer 1</text>
<rect x="913.500" y="704.500" width="13" height="13" fill="#c8d0e4" stroke="#556"/><rect x="917" y="708" width="6" height="6" fill="#fff" stroke="#a33"/><path d="M917 719.500h7" stroke="#667"/>
<path d="M949 704l6 8-6 7-6-7z" fill="#fff" stroke="#445"/><path d="M943 712h12l-6 7z" fill="#cc7a26"/>
<rect x="963.500" y="702.500" width="16" height="18" fill="#fff" stroke="#889"/><path d="M964 703l15 17" stroke="#c22" stroke-width="1.300"/>
<text x="983" y="716" textLength="47">Fill Color</text>
<path d="M1146.500 702v20" stroke="#ddd"/>
<path d="M1158 704l3 6-1.500 5h-3l-1.500-5zM1154 718h8" fill="#fff" stroke="#445" stroke-width="1.200"/>
<rect x="1171.500" y="702.500" width="17" height="18" fill="#231815" stroke="#999"/>
<text x="1192" y="716" textLength="137">C:0 M:0 Y:0 K:100  0,500 pt</text>

<!-- taskbar -->
<rect y="728" width="1366" height="40" fill="#0b0a08"/>
<g filter="url(#bl3)" fill="#5a5852">
<rect x="180" y="736" width="135" height="24"/><rect x="48" y="736" width="12" height="20"/>
<rect x="540" y="740" width="120" height="28" opacity=".8"/>
</g>
<g filter="url(#bl)" fill="none" stroke="#8e8a7e" stroke-width="3.200" stroke-linecap="round">
<path d="M646 738l43 2M610 748l57-2" stroke="#6e6a60"/>
<path d="M617 746v24M634 754l8 1M652 756v12" stroke="#a29e92" stroke-width="4"/>
<path d="M560 744c10-2 14 5 10 12l-8 10" stroke="#7a766c"/>
<path d="M785 738c-4-6-14-6-17 0-3 6 1 14 3 20l4 12" stroke="#a8a498" stroke-width="4"/>
<path d="M751 765l3 2" stroke="#a8a498" stroke-width="5"/>
<path d="M788 754h22M799 754v16" stroke="#a8a498"/>
<path d="M838 749c6 0 6 4 2 7 4 1 8 3 13 8" stroke="#8e8a7e"/>
<path d="M905 766l4-3M914 762l4-4" stroke="#8e8a7e"/>
<path d="M942 768c0-10 2-18 6-22M952 748l10 2 4 14" stroke="#9a968a"/>
<path d="M992 766h2M1018 768c0-8 4-16 12-18l10 2 1 16" stroke="#8a867a"/>
<path d="M1106 756l2 2" stroke="#8a867a" stroke-width="5"/>
<path d="M881 731h6M958 732h6M1010 731h10" stroke="#8a867a"/>
</g>
<path d="M0 728.500h1366" stroke="#4a4844"/>
<!-- start orb -->
<circle cx="27" cy="747.500" r="18" fill="url(#orb)" stroke="#123" stroke-width="1"/>
<path d="M18 740c3-1 6 0 8.500 1.500l-1.500 6c-2.500-1.500-5-2-8.500-1z" fill="#e25a28"/><path d="M28 742c3 1.500 6 1.500 9 0l-1.500 6c-3 1.500-6 1.500-9 0z" fill="#8cc43a"/><path d="M16.500 747c3-1 6 0 8.500 1.500l-1.500 6c-2.500-1.500-5-2-8.500-1z" fill="#3aa0dc"/><path d="M26.500 749c3 1.500 6 1.500 9 0l-1.500 6c-3 1.500-6 1.500-9 0z" fill="#f4c32c"/>
<!-- task buttons -->
<rect x="60.500" y="729.500" width="52" height="37" rx="2" fill="url(#ta)" stroke="#d8d8d2"/>
<rect x="114" y="730" width="4" height="36" fill="#8a8a84"/>
<g fill="url(#tb)" stroke="#8a8a82"><rect x="122.500" y="729.500" width="57" height="37" rx="2"/><rect x="370.500" y="729.500" width="58" height="37" rx="2"/><rect x="432.500" y="729.500" width="57" height="37" rx="2"/><rect x="494.500" y="729.500" width="58" height="37" rx="2"/></g>
<!-- corel -->
<rect x="70" y="732" width="32" height="32" fill="#62ad4c"/>
<path d="M77 732l8 12M83 732l4 12M89 732l0 12M95 732l-4 12M100 734l-7 10" stroke="#a4d494" stroke-width="1.800" fill="none"/>
<path d="M71 739l13 11 3 11-10-4-6-8z" fill="#fff"/><path d="M73 744l12 14" stroke="#62ad4c" stroke-width="1.200"/>
<path d="M88 746h7l-1 6h-5z" fill="#c4e4b4"/>
<!-- chrome -->
<circle cx="151" cy="747" r="14" fill="#e0382c"/><path d="M139 754a14 14 0 0012 7l7-12-14 0z" fill="#3aa63c"/><path d="M151 733a14 14 0 0112 21l-7-10-12 0z" fill="#f8c818" opacity="0"/><path d="M163 740a14 14 0 01-8 20l-7-11 7-9z" fill="#f8c818"/><circle cx="151" cy="747" r="6.500" fill="#4a8ae8" stroke="#fff" stroke-width="2"/>
<!-- IE -->
<text x="197" y="762" style="font-family:'DejaVu Sans',sans-serif;font-size:45px;font-weight:bold;fill:#2a9ae0">e</text>
<path d="M199 760c-3-10 12-28 26-30 6-1 3 6-1 10" fill="none" stroke="#e8c030" stroke-width="2.200"/>
<!-- UC -->
<rect x="259" y="732" width="32" height="33" rx="7" fill="url(#uc)"/>
<path d="M272 735c-8 2-8 9-4 12-5 2-7 7-5 12M274 741l4 5 6-7 2 6-3 6" fill="none" stroke="#fff" stroke-width="2.400"/>
<path d="M266 761a8 8 0 0115 0M270 761a4 4 0 017 0" fill="none" stroke="#fff" stroke-width="1.800"/>
<!-- folder -->
<path d="M321 738h10l2 3h19v18h-31z" fill="#eed27c" stroke="#a88a3c"/><rect x="324" y="735" width="8" height="5" fill="#e8e4d8"/><rect x="326" y="736" width="3" height="2" fill="#3aa535"/><rect x="334" y="737" width="8" height="4" fill="#cfe0e8"/><path d="M321 748h31v12h-31z" fill="#f4de98"/><path d="M327 762v-9h20v9h-5v-4h-10v4z" fill="#8ab4d4" stroke="#3a6a90"/>
<!-- media -->
<rect x="390" y="737" width="16" height="23" fill="#5ca0d4"/><rect x="386" y="735" width="17" height="26" fill="#c8dcec" stroke="#4a80ac"/><circle cx="395" cy="748" r="8.500" fill="#f08a1c"/><path d="M392 743l8 5-8 5z" fill="#fff"/>
<!-- notepad -->
<path d="M456 730l18 4-3 24-25 0z" fill="#a8d4e6" stroke="#6aa0b8" transform="translate(0 2)"/><path d="M458 733l14 3" stroke="#999" stroke-dasharray="1 1"/><path d="M448 759l7-14 15-2-2 16z" fill="#6fb4ce"/>
<!-- last app -->
<path d="M514 756a13 13 0 01-1-14l4-4" fill="none" stroke="#777" stroke-width="4.500"/><path d="M524 735a12 12 0 0112 10" fill="none" stroke="#e04a28" stroke-width="4.500"/><path d="M536 750a12 12 0 01-14 10" fill="none" stroke="#888" stroke-width="4.500"/><circle cx="524" cy="748" r="5" fill="none" stroke="#777" stroke-width="3"/>
<!-- tray -->
<text x="1126" y="750" style="fill:#e4e4e4;font-size:11px">IN</text>
<path d="M1156 752l4-4 4 4z" fill="#f0f0f0"/>
<path d="M1178 744h3l4-4v15l-4-4h-3z" fill="#eee"/><path d="M1187 744c2 2 2 5 0 7" stroke="#ddd" fill="none"/>
<path d="M1204 741v15" stroke="#eee" stroke-width="1.500"/><path d="M1205 741h10v8h-10z" fill="#eee"/><circle cx="1211" cy="752" r="4.500" fill="#d52020"/><path d="M1209 750l4 4M1213 750l-4 4" stroke="#fff"/>
<path d="M1228 745h11v6h-11z" fill="#eee"/><path d="M1231 741v4M1236 741v4M1233 751v5" stroke="#eee" stroke-width="1.500"/><path d="M1226 746h8v9h-8z" fill="#c81818"/><path d="M1228 748l4 5M1232 748l-4 5" stroke="#fff"/>
<path d="M1250 752h2v2h-2zM1254 749h2v5h-2zM1258 745h2v9h-2z" fill="#eee"/><path d="M1262 744l-6 11h12z" fill="#f0c820"/><path d="M1262 748v4M1262 753v1" stroke="#222"/>
<text x="1298" y="745" style="fill:#eaeaea;font-size:12px" textLength="28">23:06</text>
<text x="1281" y="764" style="fill:#eaeaea;font-size:12px" textLength="58">16/10/2015</text>
<rect x="1352.500" y="729.500" width="13" height="37" fill="#222" stroke="#666"/>
</svg>
</body></html>
